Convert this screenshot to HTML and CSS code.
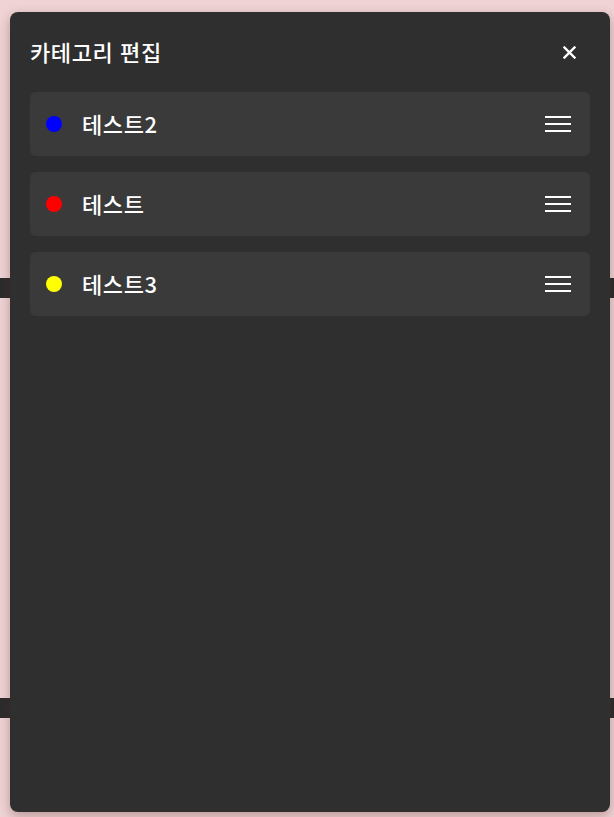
FILE: index.html
```html
<!DOCTYPE html>
<html lang="ko">
<head>
<meta charset="utf-8">
<link rel="stylesheet" href="styles.css">
</head>
<body>
<div class="bg-bar bar-a"></div>
<div class="bg-bar bar-b"></div>
<div class="modal">
  <div class="modal-header">
    <h2 class="title">카테고리 편집</h2>
    <button class="close" aria-label="닫기">
      <svg width="13" height="13" viewBox="0 0 13 13"><path d="M1.5 1.5L11.5 11.5M11.5 1.5L1.5 11.5" stroke="#fff" stroke-width="2.4" stroke-linecap="square"/></svg>
    </button>
  </div>
  <ul class="list">
    <li class="item"><span class="dot blue"></span><span class="name">테스트2</span><span class="handle"><i></i><i></i><i></i></span></li>
    <li class="item"><span class="dot red"></span><span class="name">테스트</span><span class="handle"><i></i><i></i><i></i></span></li>
    <li class="item"><span class="dot yellow"></span><span class="name">테스트3</span><span class="handle"><i></i><i></i><i></i></span></li>
  </ul>
</div>
</body>
</html>
```
FILE: styles.css
```css
* { box-sizing: border-box; }
html, body { margin: 0; height: 100%; }
body {
  background: #efd3d5;
  font-family: "Noto Sans CJK KR", "Noto Sans", sans-serif;
  position: relative;
  overflow: hidden;
}
.bg-bar {
  position: absolute;
  left: 0; right: 0;
  height: 20px;
  background: #2b2b2b;
}
.bar-a { top: 278px; }
.bar-b { top: 698px; }
.modal {
  position: absolute;
  left: 10px; top: 12px;
  width: 600px; height: 800px;
  background: #2f2f2f;
  border-radius: 8px;
  box-shadow: 0 4px 12px rgba(90, 40, 40, 0.35);
  padding: 0 20px;
}
.modal-header {
  display: flex;
  align-items: center;
  justify-content: space-between;
  height: 80px;
}
.title {
  margin: 0;
  color: #fff;
  font-size: 22px;
  font-weight: 500;
  letter-spacing: 0.6px;
  line-height: 1;
  padding-bottom: 2px;
}
.close {
  background: none;
  border: 0;
  padding: 0;
  margin-right: 14px;
  width: 13px; height: 13px;
  display: flex;
}
.list {
  list-style: none;
  margin: 0;
  padding: 0;
  display: flex;
  flex-direction: column;
  gap: 16px;
}
.item {
  height: 64px;
  background: #3a3a3a;
  border-radius: 6px;
  display: flex;
  align-items: center;
  padding: 0 19px 0 16px;
}
.dot {
  width: 16px; height: 16px;
  border-radius: 50%;
  flex: none;
}
.blue { background: #0000ff; }
.red { background: #ff0000; }
.yellow { background: #ffff00; }
.name {
  margin-left: 20px;
  color: #fff;
  font-size: 22px;
  font-weight: 500;
  flex: 1;
  letter-spacing: 0.6px;
  line-height: 1;
  padding-bottom: 3px;
}
.handle {
  width: 26px;
  display: flex;
  flex-direction: column;
  gap: 5px;
}
.handle i {
  display: block;
  height: 2px;
  background: #fff;
}
```
